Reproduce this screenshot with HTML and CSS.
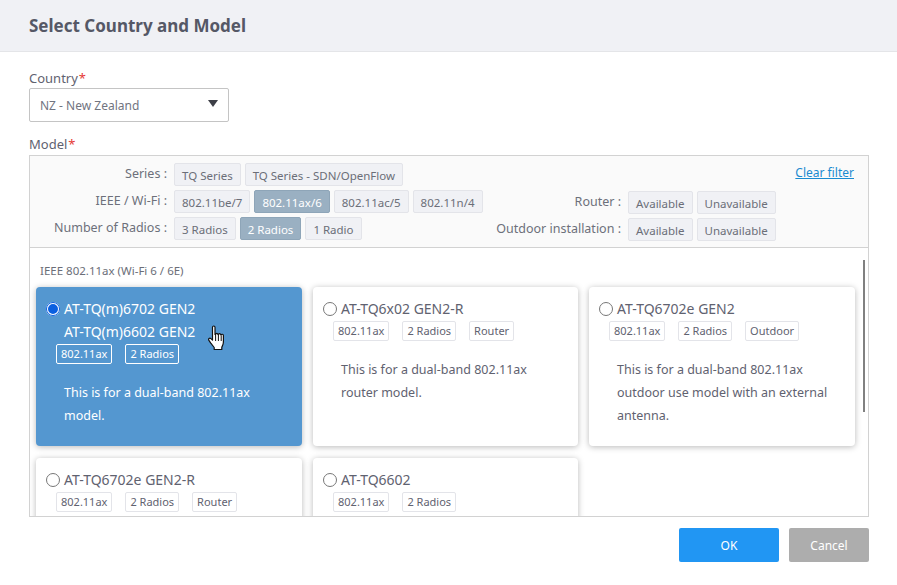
FILE: index.html
```html
<!DOCTYPE html>
<html lang="en">
<head>
    <meta charset="UTF-8">
    <meta name="viewport" content="width=device-width, initial-scale=1.0">
    <title>Select Country and Model</title>
    <link rel="stylesheet" href="styles.css">
</head>

<body>
    <div class="dialog">
        <div class="dialog-header">Select Country and Model</div>

        <div class="dialog-body">
            <div class="field-label">Country<span class="req">*</span></div>
            <div class="select">
                <span>NZ - New Zealand</span>
                <span class="select-arrow"></span>
            </div>

            <div class="field-label model-label">Model<span class="req">*</span></div>
            <div class="model-box">
                <div class="filters">
                    <div class="filter-col left-col">
                        <div class="filter-row">
                            <div class="filter-name">Series :</div>
                            <span class="chip">TQ Series</span>
                            <span class="chip">TQ Series - SDN/OpenFlow</span>
                        </div>
                        <div class="filter-row">
                            <div class="filter-name">IEEE / Wi-Fi :</div>
                            <span class="chip">802.11be/7</span>
                            <span class="chip on">802.11ax/6</span>
                            <span class="chip">802.11ac/5</span>
                            <span class="chip">802.11n/4</span>
                        </div>
                        <div class="filter-row">
                            <div class="filter-name">Number of Radios :</div>
                            <span class="chip">3 Radios</span>
                            <span class="chip on">2 Radios</span>
                            <span class="chip">1 Radio</span>
                        </div>
                    </div>
                    <div class="filter-col right-col">
                        <div class="filter-row clear-row"><a href="#" class="clear-link">Clear filter</a></div>
                        <div class="filter-row">
                            <div class="filter-name">Router :</div>
                            <span class="chip">Available</span>
                            <span class="chip">Unavailable</span>
                        </div>
                        <div class="filter-row">
                            <div class="filter-name">Outdoor installation :</div>
                            <span class="chip">Available</span>
                            <span class="chip">Unavailable</span>
                        </div>
                    </div>
                </div>

                <div class="model-list">
                    <div class="list-title">IEEE 802.11ax (Wi-Fi 6 / 6E)</div>
                    <div class="cards">
                        <div class="card selected">
                            <div class="card-title"><span class="radio"></span>AT-TQ(m)6702 GEN2</div>
                            <div class="card-title second">AT-TQ(m)6602 GEN2</div>
                            <div class="tags">
                                <span class="tag">802.11ax</span>
                                <span class="tag">2 Radios</span>
                            </div>
                            <p class="card-text">This is for a dual-band 802.11ax<br>model.</p>
                        </div>
                        <div class="card">
                            <div class="card-title"><span class="radio"></span>AT-TQ6x02 GEN2-R</div>
                            <div class="tags">
                                <span class="tag">802.11ax</span>
                                <span class="tag">2 Radios</span>
                                <span class="tag">Router</span>
                            </div>
                            <p class="card-text">This is for a dual-band 802.11ax<br>router model.</p>
                        </div>
                        <div class="card">
                            <div class="card-title"><span class="radio"></span>AT-TQ6702e GEN2</div>
                            <div class="tags">
                                <span class="tag">802.11ax</span>
                                <span class="tag">2 Radios</span>
                                <span class="tag">Outdoor</span>
                            </div>
                            <p class="card-text">This is for a dual-band 802.11ax<br>outdoor use model with an external<br>antenna.</p>
                        </div>
                        <div class="card">
                            <div class="card-title"><span class="radio"></span>AT-TQ6702e GEN2-R</div>
                            <div class="tags">
                                <span class="tag">802.11ax</span>
                                <span class="tag">2 Radios</span>
                                <span class="tag">Router</span>
                            </div>
                        </div>
                        <div class="card">
                            <div class="card-title"><span class="radio"></span>AT-TQ6602</div>
                            <div class="tags">
                                <span class="tag">802.11ax</span>
                                <span class="tag">2 Radios</span>
                            </div>
                        </div>
                    </div>
                    <div class="scrollbar"></div>
                </div>
            </div>

            <div class="actions">
                <button class="btn btn-ok">OK</button>
                <button class="btn btn-cancel">Cancel</button>
            </div>
        </div>

        <svg class="hand" width="17" height="26" viewBox="0 0 17 26">
            <path d="M4.5 2.2c0-1.600 2.500-1.600 2.500 0v7.300l.6-.1c0-1.500 2.300-1.500 2.300 0l.5.200c.1-1.400 2.200-1.300 2.300.1l.4.300c.3-1.100 2.300-1 2.300.5v6.500c0 2.500-.9 3.700-1.600 5.200v2.300H6.200v-2c-1-1.500-2.200-2.700-3.400-4.300L.9 15.300c-.9-1.300.7-2.800 2-1.700l1.600 1.500z" fill="#fff" stroke="#111" stroke-width="1.200" stroke-linejoin="round"/>
            <path d="M7.600 10v6M10.400 10v6M13.200 10.500V16" fill="none" stroke="#111" stroke-width="1"/>
        </svg>
    </div>
</body>
</html>
```

FILE: styles.css
```css
html, body {
    margin: 0;
    padding: 0;
}

body {
    font-family: "Noto Sans", Arial, sans-serif;
    font-size: 13px;
    color: #5f6270;
    background-color: #fff;
}

.dialog {
    position: relative;
    width: 897px;
    height: 585px;
    overflow: hidden;
}

.dialog-header {
    height: 51px;
    line-height: 51px;
    padding-left: 29px;
    background-color: #f0f1f5;
    border-bottom: 1px solid #e4e5e8;
    font-size: 17px;
    font-weight: 700;
    color: #555866;
}

.dialog-body {
    padding: 0 28px 0 29px;
}

.field-label {
    margin-top: 16px;
    height: 20px;
    line-height: 20px;
    font-size: 13px;
}

.model-label {
    margin-top: 12px;
    height: 21px;
}

.req {
    color: #e53935;
    margin-left: 1px;
}

.select {
    display: flex;
    justify-content: space-between;
    align-items: center;
    box-sizing: border-box;
    width: 200px;
    height: 34px;
    padding: 0 10px;
    border: 1px solid #c4c4c4;
    border-radius: 2px;
    font-size: 12px;
    color: #71747f;
}

.select-arrow {
    width: 0;
    height: 0;
    border-left: 5px solid transparent;
    border-right: 5px solid transparent;
    border-top: 7px solid #3d3f47;
    margin-top: -3px;
}

.model-box {
    box-sizing: border-box;
    width: 840px;
    height: 362px;
    border: 1px solid #d2d2d2;
    overflow: hidden;
}

.filters {
    display: flex;
    justify-content: space-between;
    box-sizing: border-box;
    height: 92px;
    padding: 7px 14px 0 0;
    background-color: #fafafa;
    border-bottom: 1px solid #d2d2d2;
}

.filter-col {
    display: flex;
    flex-direction: column;
    gap: 4px;
}

.left-col .filter-name {
    width: 137px;
}

.right-col {
    width: 360px;
}

.right-col .filter-name {
    width: 127px;
}

.filter-row {
    display: flex;
    gap: 4px;
    height: 23px;
}

.clear-row {
    justify-content: flex-end;
    padding-top: 1px;
}

.filter-name {
    line-height: 21px;
    margin-right: 3px;
    text-align: right;
    font-size: 12.500px;
    color: #6d707a;
    white-space: nowrap;
}

.chip {
    box-sizing: border-box;
    height: 23px;
    line-height: 23px;
    padding: 0 7px;
    background-color: #f0f1f5;
    border: 1px solid #e3e4e9;
    border-radius: 2px;
    font-size: 11.500px;
    color: #6b6e78;
    white-space: nowrap;
}

.chip.on {
    background-color: #9ab0c2;
    border-color: #8ea5b8;
    color: #fff;
}

.clear-link {
    font-size: 12px;
    line-height: 18px;
    color: #1a8bd0;
    text-decoration: underline;
}

.model-list {
    position: relative;
    height: 269px;
    overflow: hidden;
    padding-left: 6px;
}

.list-title {
    height: 39px;
    padding: 15px 0 0 4px;
    box-sizing: border-box;
    line-height: 16px;
    font-size: 11.500px;
    color: #6b6e78;
}

.cards {
    display: grid;
    grid-template-columns: 266px 265px 266px;
    grid-auto-rows: 159px;
    column-gap: 11px;
    row-gap: 12px;
}

.card {
    box-sizing: border-box;
    padding: 10px 10px 0 10px;
    background-color: #fff;
    border-radius: 4px;
    box-shadow: 0 1px 6px rgba(0, 0, 0, 0.28);
}

.card-title {
    display: flex;
    align-items: center;
    height: 23px;
    font-size: 14px;
    color: #5f6270;
    white-space: nowrap;
}

.card-title.second {
    padding-left: 18px;
}

.radio {
    box-sizing: border-box;
    width: 14px;
    height: 14px;
    margin-right: 4px;
    border: 1px solid #777;
    border-radius: 50%;
    background-color: #fff;
}

.tags {
    display: flex;
    gap: 13px;
    padding-left: 10px;
    margin-top: 1px;
}

.tag {
    box-sizing: border-box;
    height: 20px;
    line-height: 18px;
    padding: 0 4px;
    background-color: #fff;
    border: 1px solid #e3e4e9;
    border-radius: 2px;
    font-size: 11px;
    color: #5f6270;
}

.card-text {
    margin: 17px 0 0 18px;
    font-size: 12.500px;
    line-height: 23px;
    color: #5f6270;
}

.card.selected {
    background-color: #5497d0;
}

.selected .card-title,
.selected .card-text {
    color: #fff;
}

.selected .radio {
    background-color: #0a5fe0;
    border: 2px solid #fff;
    outline: 1px solid #0a5fe0;
    outline-offset: -1px;
}

.selected .tag {
    background-color: transparent;
    border-color: #fff;
    color: #fff;
}

.scrollbar {
    position: absolute;
    top: 12px;
    right: 3px;
    width: 2px;
    height: 152px;
    background-color: #808080;
}

.actions {
    display: flex;
    justify-content: flex-end;
    gap: 10px;
    width: 840px;
    margin-top: 11px;
}

.btn {
    height: 34px;
    border: none;
    border-radius: 2px;
    color: #fff;
    font-family: inherit;
    font-size: 12px;
}

.btn-ok {
    width: 100px;
    background-color: #2196f3;
}

.btn-cancel {
    width: 80px;
    background-color: #adadad;
}

.hand {
    position: absolute;
    left: 208px;
    top: 325px;
}
```
